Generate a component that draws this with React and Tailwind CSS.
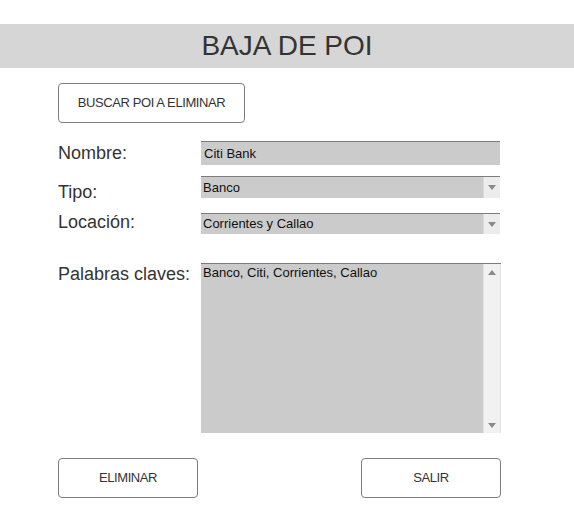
import React from 'react';

const Label = ({ children, pt }) => (
  <div className={`w-[143px] shrink-0 text-[18px] leading-[18px] text-[#333] ${pt}`}>{children}</div>
);

const Arrow = ({ up }) => (
  <svg width="8" height="5" viewBox="0 0 8 5" className="block">
    {up ? <path d="M0 5 L4 0 L8 5 Z" fill="#8a8a8a" /> : <path d="M0 0 L8 0 L4 5 Z" fill="#8a8a8a" />}
  </svg>
);

const Select = ({ value, h }) => (
  <div className={`w-[299px] ${h} flex bg-[#cbcbcb] border-t border-[#7c7c7c]`}>
    <div className="flex-1 flex items-center pl-[2px] text-[13px] text-[#111]">{value}</div>
    <div className="w-[17px] bg-[#ececec] border-l border-[#dcdcdc] flex items-center justify-center">
      <Arrow />
    </div>
  </div>
);

function App() {
  return (
    <div className="w-[574px] h-[530px] bg-white pt-6 font-['Liberation_Sans',Arial,sans-serif]">
      <header className="h-11 bg-[#d6d6d6] flex items-center justify-center text-[28px] leading-none text-[#333]">
        BAJA DE POI
      </header>

      <div className="pl-[58px]">
        <button className="mt-[15px] w-[187px] h-10 border border-[#7d7d7d] rounded-[4px] bg-white text-[13px] tracking-[-0.4px] text-[#333]">
          BUSCAR POI A ELIMINAR
        </button>

        <div className="mt-[18px] h-6 flex">
          <Label pt="pt-[3px]">Nombre:</Label>
          <div className="w-[299px] h-6 flex items-center pl-[3px] bg-[#cbcbcb] border-t border-[#7c7c7c] text-[13px] text-[#111]">
            Citi Bank
          </div>
        </div>

        <div className="mt-[11px] h-[22px] flex items-start">
          <Label pt="pt-[7px]">Tipo:</Label>
          <Select value="Banco" h="h-[22px]" />
        </div>

        <div className="mt-[15px] h-[21px] flex items-start">
          <Label pt="pt-0">Locación:</Label>
          <Select value="Corrientes y Callao" h="h-[21px]" />
        </div>

        <div className="mt-[29px] h-[170px] flex items-start">
          <Label pt="pt-[2px]">Palabras claves:</Label>
          <div className="w-[300px] h-[170px] flex bg-[#cbcbcb] border-t border-[#7c7c7c]">
            <div className="flex-1 pl-[2px] pt-[1px] text-[13px] leading-[15px] text-[#111]">
              Banco, Citi, Corrientes, Callao
            </div>
            <div className="w-[18px] bg-[#f1f1f1] border-l border-r border-[#e2e2e2] flex flex-col items-center justify-between pt-[6px] pb-[5px]">
              <Arrow up />
              <Arrow />
            </div>
          </div>
        </div>

        <div className="mt-[25px] w-[443px] flex justify-between">
          <button className="w-[140px] h-10 border border-[#7d7d7d] rounded-[4px] bg-white text-[13px] tracking-[-0.4px] text-[#333]">
            ELIMINAR
          </button>
          <button className="w-[140px] h-10 border border-[#7d7d7d] rounded-[4px] bg-white text-[13px] tracking-[-0.4px] text-[#333]">
            SALIR
          </button>
        </div>
      </div>
    </div>
  );
}

export default App;
